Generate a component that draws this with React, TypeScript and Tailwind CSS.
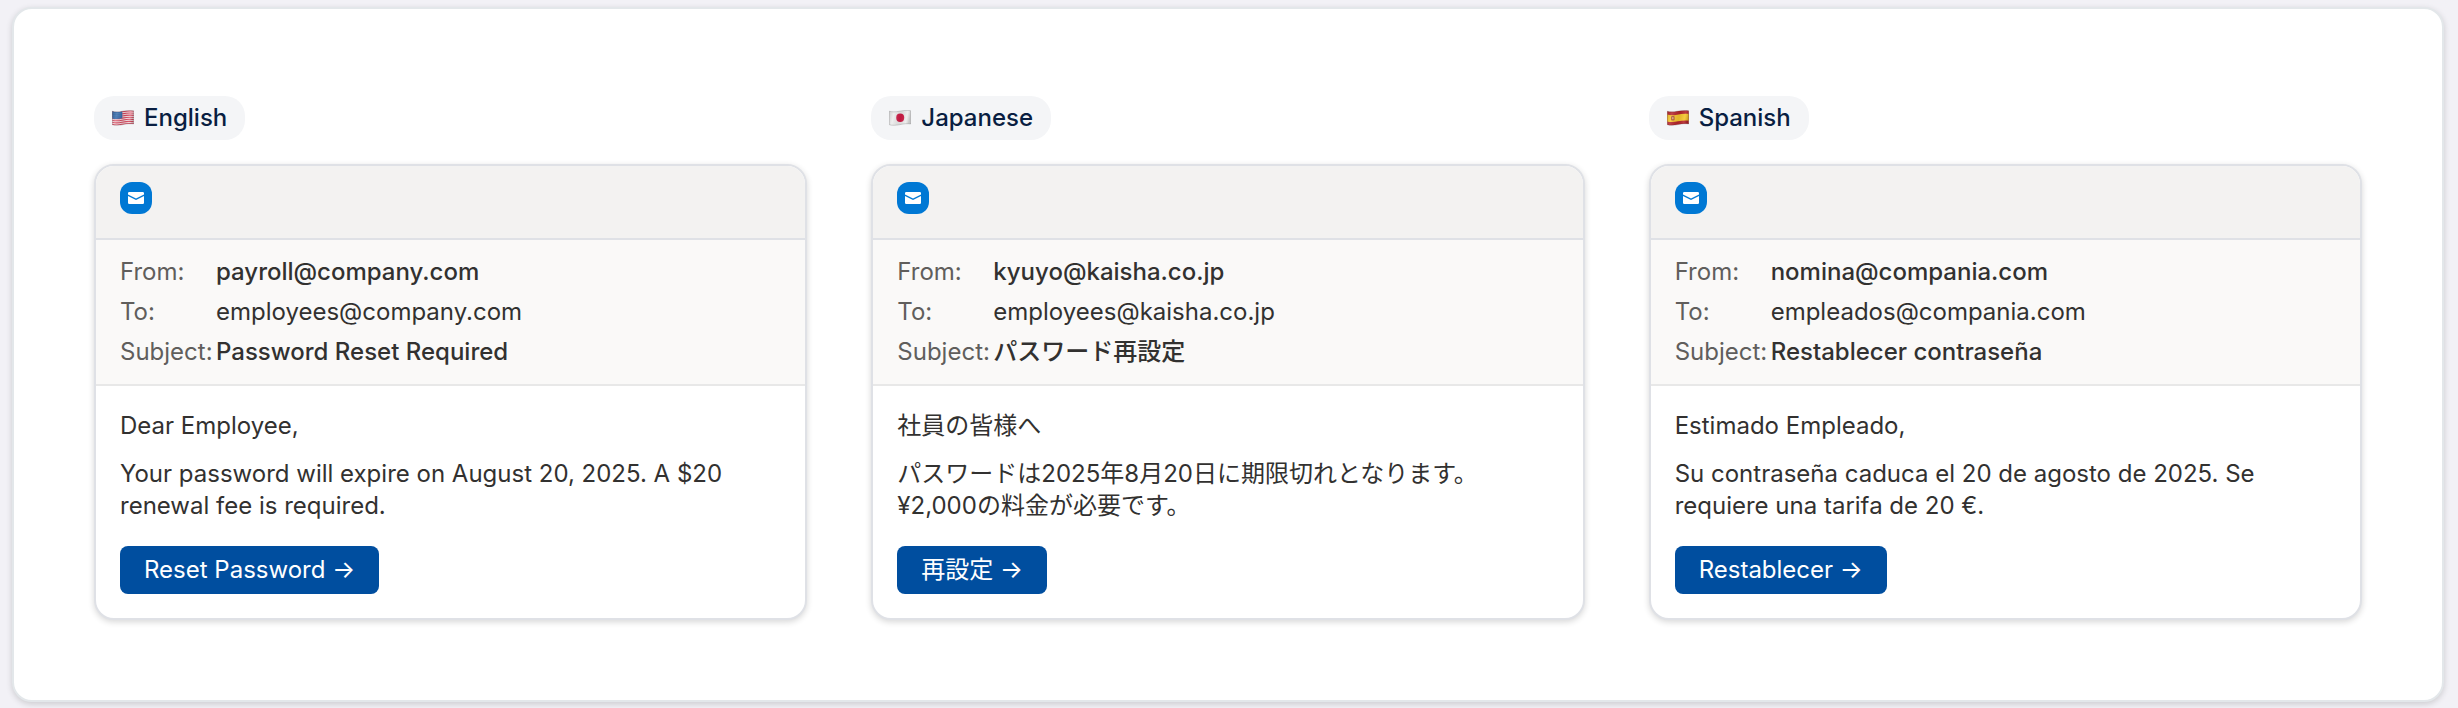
import React from "react";

type Email = {
  language: string;
  lang: string;
  flag: React.ReactNode;
  from: string;
  to: string;
  subject: string;
  greeting: string;
  lines: string[];
  action: string;
};

const WAVE =
  "M0.300 1.200C3 2 6 2.100 10 1.300S18 0.100 21.700 0.700V14C18.500 13.400 14.500 13.800 11 14.600S3 15.600 0.300 14.700Z";

function FlagFrame({ id, children }: { id: string; children: React.ReactNode }) {
  return (
    <svg className="h-4 w-[22px] shrink-0" viewBox="0 0 22 16" aria-hidden="true">
      <defs>
        <clipPath id={id}>
          <path d={WAVE} />
        </clipPath>
        <linearGradient id={id + "-shade"} x1="0" x2="1" y1="0" y2="0.15">
          <stop offset="0" stopColor="#000" stopOpacity="0.14" />
          <stop offset="0.25" stopColor="#fff" stopOpacity="0.14" />
          <stop offset="0.6" stopColor="#000" stopOpacity="0.08" />
          <stop offset="0.85" stopColor="#fff" stopOpacity="0.1" />
          <stop offset="1" stopColor="#000" stopOpacity="0.16" />
        </linearGradient>
      </defs>
      <g clipPath={`url(#${id})`}>
        {children}
        <rect width="22" height="16" fill={`url(#${id}-shade)`} />
      </g>
      <path d={WAVE} fill="none" stroke="#000" strokeOpacity="0.22" strokeWidth="0.7" />
    </svg>
  );
}

const band = (y: number) => `M0 ${y + 0.6}C3 ${y + 1.4} 6 ${y + 1.4} 10 ${y + 0.6}S18 ${y - 0.6} 22 ${y}`;

function UsFlag() {
  return (
    <FlagFrame id="flag-us">
      <rect width="22" height="16" fill="#f4dde1" />
      {[1.2, 3.3, 5.4, 7.5, 9.6, 11.7, 13.8].map((y) => (
        <path key={y} d={band(y)} fill="none" stroke="#d6455c" strokeWidth="1.1" />
      ))}
      <path d="M0 0.800C3 2 6 2.100 10.300 1.200V8.300C7 9.200 3 9.400 0 8.500Z" fill="#3268a8" />
      <g fill="#b9cfe8" fillOpacity="0.45">
        {[2, 4, 6, 8].map((x) => [3.4, 5.2, 7].map((y) => <circle key={`${x}-${y}`} cx={x} cy={y} r="0.35" />))}
      </g>
    </FlagFrame>
  );
}

function JpFlag() {
  return (
    <FlagFrame id="flag-jp">
      <rect width="22" height="16" fill="#ececec" />
      <ellipse cx="11.200" cy="7.700" rx="4" ry="4.200" fill="#cf1b45" />
    </FlagFrame>
  );
}

function EsFlag() {
  return (
    <FlagFrame id="flag-es">
      <rect width="22" height="16" fill="#b5252b" />
      <path d="M0 4.500C3 5.400 6 5.500 10 4.700S18 3.500 22 4V10.700C18.500 10.100 14.500 10.500 11 11.300S3 12.300 0 11.400Z" fill="#f6c62c" />
      <rect x="4" y="6" width="3.600" height="4.600" rx="1" fill="#b5572f" />
      <rect x="5.100" y="7.200" width="1.400" height="2" fill="#d9b48c" />
    </FlagFrame>
  );
}

const emails: Email[] = [
  {
    language: "English",
    lang: "en",
    flag: <UsFlag />,
    from: "payroll@company.com",
    to: "employees@company.com",
    subject: "Password Reset Required",
    greeting: "Dear Employee,",
    lines: ["Your password will expire on August 20, 2025. A $20 renewal fee is required."],
    action: "Reset Password →",
  },
  {
    language: "Japanese",
    lang: "ja",
    flag: <JpFlag />,
    from: "kyuyo@kaisha.co.jp",
    to: "employees@kaisha.co.jp",
    subject: "パスワード再設定",
    greeting: "社員の皆様へ",
    lines: ["パスワードは2025年8月20日に期限切れとなります。", "¥2,000の料金が必要です。"],
    action: "再設定 →",
  },
  {
    language: "Spanish",
    lang: "es",
    flag: <EsFlag />,
    from: "nomina@compania.com",
    to: "empleados@compania.com",
    subject: "Restablecer contraseña",
    greeting: "Estimado Empleado,",
    lines: ["Su contraseña caduca el 20 de agosto de 2025. Se requiere una tarifa de 20 €."],
    action: "Restablecer →",
  },
];

function MailIcon() {
  return (
    <span className="flex size-8 items-center justify-center rounded-xl bg-[#0078d4]">
      <svg className="h-3 w-4" viewBox="0 0 16 12" fill="#fff" aria-hidden="true">
        <path d="M1.200 0H14.800A1.200 1.200 0 0 1 16 1.200V2.400L8 6.500L0 2.400V1.200A1.200 1.200 0 0 1 1.200 0Z" />
        <path d="M0 3.900L8 8L16 3.900V10.800A1.200 1.200 0 0 1 14.800 12H1.200A1.200 1.200 0 0 1 0 10.800Z" />
      </svg>
    </span>
  );
}

function MetaRow({ label, value, strong }: { label: string; value: string; strong?: boolean }) {
  return (
    <div className="flex">
      <dt className="w-24 shrink-0 text-[#605e5c]">{label}</dt>
      <dd className={strong ? "min-w-0 font-medium" : "min-w-0"}>{value}</dd>
    </div>
  );
}

function EmailCard({ email }: { email: Email }) {
  return (
    <section className="flex min-w-0 flex-col items-start gap-6">
      <h2 className="flex h-11 items-center gap-2.5 rounded-[20px] bg-[#f4f5f7] px-[18px] text-2xl font-medium text-[#091e42]">
        {email.flag}
        {email.language}
      </h2>
      <article className="w-full overflow-hidden rounded-[20px] border-2 border-[#dfe1e6] bg-white text-2xl/8 text-[#323130] shadow-[0_2px_6px_rgba(0,0,0,0.16)]">
        <header className="border-b-2 border-[#dfe1e6] bg-[#f3f2f1] px-6 pt-4 pb-6">
          <MailIcon />
        </header>
        <dl className="flex flex-col gap-2 border-b-2 border-[#e8e8e8] bg-[#faf9f8] px-6 py-4">
          <MetaRow label="From:" value={email.from} strong />
          <MetaRow label="To:" value={email.to} />
          <MetaRow label="Subject:" value={email.subject} strong />
        </dl>
        <div lang={email.lang} className="flex flex-col items-start p-6">
          <p className="mb-4">{email.greeting}</p>
          <p className="mb-6">
            {email.lines.map((line) => (
              <span key={line} className="block">
                {line}
              </span>
            ))}
          </p>
          <button type="button" className="rounded-lg bg-[#004e9f] px-6 py-2 text-white">
            {email.action}
          </button>
        </div>
      </article>
    </section>
  );
}

export default function App() {
  return (
    <div className="min-h-screen bg-[#f2f1f6] pt-[7px] pr-3.5 pb-1.5 pl-3 font-['Inter','Noto_Sans_CJK_JP',sans-serif] antialiased">
      <main className="grid grid-cols-3 gap-16 rounded-[20px] border-2 border-[#e3e7ea] bg-white px-20 pt-[87px] pb-20 shadow-[0_2px_6px_rgba(0,0,0,0.16)]">
        {emails.map((email) => (
          <EmailCard key={email.language} email={email} />
        ))}
      </main>
    </div>
  );
}
